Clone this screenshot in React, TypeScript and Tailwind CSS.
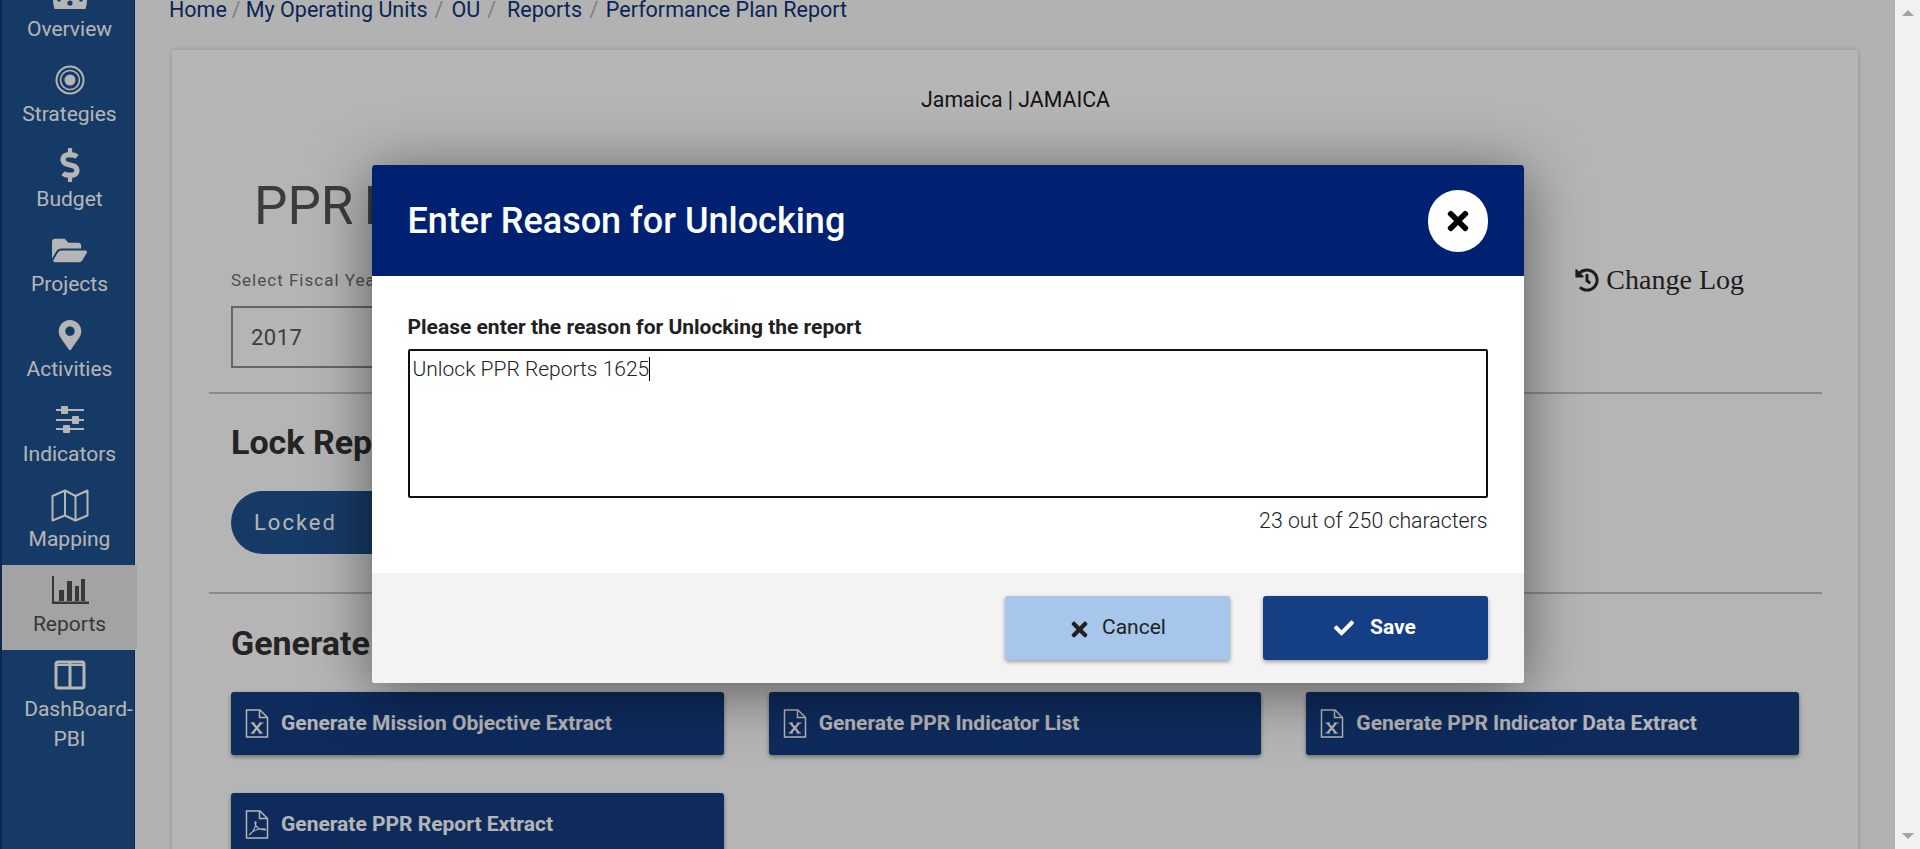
import { FaCheck, FaDollarSign, FaFolderOpen, FaHistory, FaMapMarkerAlt, FaTimes } from "react-icons/fa";

const font = { fontFamily: "Roboto, sans-serif" };

function OverviewIcon() {
  return (
    <svg width="36" height="30" viewBox="0 0 36 30" fill="currentColor">
      <path d="M18 1C8 1 1 9 1 20c0 3 .5 6 1.500 9h31c1-3 1.500-6 1.500-9C35 9 28 1 18 1z" />
      <circle cx="18" cy="23" r="2.600" fill="#205290" />
      <circle cx="7" cy="20" r="1.800" fill="#205290" />
      <circle cx="29" cy="20" r="1.800" fill="#205290" />
    </svg>
  );
}

function TargetIcon() {
  return (
    <svg width="30" height="30" viewBox="0 0 30 30" fill="none" stroke="currentColor">
      <circle cx="15" cy="15" r="13.500" strokeWidth="2" />
      <circle cx="15" cy="15" r="9.500" strokeWidth="1.600" />
      <circle cx="15" cy="15" r="5.500" fill="currentColor" strokeWidth="0" />
    </svg>
  );
}

function SlidersIcon() {
  return (
    <svg width="30" height="28" viewBox="0 0 30 28" fill="currentColor">
      <rect x="1" y="3" width="28" height="2" />
      <rect x="1" y="13" width="28" height="2" />
      <rect x="1" y="22" width="28" height="2" />
      <rect x="6" y="0" width="7" height="8" rx="1" />
      <rect x="17" y="10" width="7" height="8" rx="1" />
      <rect x="8" y="19" width="7" height="8" rx="1" />
    </svg>
  );
}

function MapIcon() {
  return (
    <svg width="38" height="33" viewBox="0 0 38 33" fill="none" stroke="currentColor" strokeWidth="2" strokeLinejoin="round">
      <path d="M1.500 7L14 1.500 24.500 7 36.500 1.500V26.500L24.500 31.500 14 26.500 1.500 31.500z" />
      <path d="M14 1.500v25M24.500 7v24.500" />
    </svg>
  );
}

function BarsIcon() {
  return (
    <svg width="38" height="28" viewBox="0 0 38 28" fill="currentColor">
      <path d="M1 0h2v25.500h35V28H1z" />
      <rect x="8" y="14" width="5" height="11" />
      <rect x="16" y="5" width="5" height="20" />
      <rect x="24" y="10" width="4" height="15" />
      <rect x="30" y="3" width="4" height="22" />
    </svg>
  );
}

function ColumnsIcon() {
  return (
    <svg width="32" height="30" viewBox="0 0 32 30" fill="none" stroke="currentColor" strokeWidth="3">
      <rect x="2" y="2" width="28" height="26" rx="2" />
      <path d="M16 3v25" />
      <path d="M2 5h28" strokeWidth="2" />
    </svg>
  );
}

function FileIcon({ kind }: { kind: "x" | "pdf" }) {
  return (
    <svg width="24" height="29" viewBox="0 0 24 29" fill="none" stroke="currentColor" strokeWidth="1.500" className="shrink-0">
      <path d="M1.500 1h13.500l7.500 7.500V28h-21z" />
      <path d="M14.500 1.500v7h7.500" />
      {kind === "x" ? (
        <g strokeWidth="2.200">
          <path d="M7.500 14l8.500 10M16 14l-8.500 10" />
          <path d="M5.500 14h4.500M14 14h4.500M5.500 24h4.500M13.500 24h4.500" strokeWidth="1.200" />
        </g>
      ) : (
        <path d="M4 25c3-2 6-6 7-12 0-2-1-2-1 0 0 4 5 7 10 7 1 0 1-1 0-1-5-1-12 1-16 6z" strokeWidth="1.100" />
      )}
    </svg>
  );
}

const navItems = [
  { label: "Overview", icon: <OverviewIcon /> },
  { label: "Strategies", icon: <TargetIcon /> },
  { label: "Budget", icon: <FaDollarSign size={34} /> },
  { label: "Projects", icon: <FaFolderOpen size={35} /> },
  { label: "Activities", icon: <FaMapMarkerAlt size={30} /> },
  { label: "Indicators", icon: <SlidersIcon /> },
  { label: "Mapping", icon: <MapIcon /> },
  { label: "Reports", icon: <BarsIcon />, active: true },
];

// separators are not evenly spaced in the breadcrumb
const crumbs = [
  { label: "Home", sep: "" },
  { label: "My Operating Units", sep: "px-[5px]" },
  { label: "OU", sep: "pl-[7px] pr-[8px]" },
  { label: "Reports", sep: "pl-[7px] pr-[11px]" },
  { label: "Performance Plan Report", sep: "px-[7.5px]" },
];

function GenerateButton({ label, kind }: { label: string; kind: "x" | "pdf" }) {
  return (
    <button className="flex h-[63px] items-center gap-[12px] rounded-[3px] bg-[#143d82] pl-[14px] text-[21px] font-bold text-white shadow-[0_2px_4px_rgba(0,0,0,0.4)]">
      <FileIcon kind={kind} />
      <span>{label}</span>
    </button>
  );
}

function Sidebar() {
  return (
    <aside className="z-10 -mt-[30px] h-[879px] w-[135px] shrink-0 border-l-2 border-r border-l-[#15396b] border-r-[#15396b] bg-[#205290] text-[21px] text-white">
      {navItems.map((item) => (
        <div
          key={item.label}
          className={`flex h-[85px] w-[135px] flex-col items-center pt-[6px] ${
            item.active ? "bg-[#e6e6e6] text-[#4f4f4f]" : ""
          }`}
        >
          <div className="flex h-[38px] items-center justify-center">{item.icon}</div>
          <span className="leading-[30px]">{item.label}</span>
        </div>
      ))}
      <div className="flex w-[135px] flex-col items-center pt-[6px]">
        <div className="flex h-[38px] items-center justify-center">
          <ColumnsIcon />
        </div>
        <span className="ml-[18px] leading-[30px]">DashBoard-</span>
        <span className="leading-[30px]">PBI</span>
      </div>
    </aside>
  );
}

function PageContent() {
  return (
    <main className="min-w-0 flex-1">
      <nav className="-mt-[3px] flex h-[26px] items-center pl-[34px] text-[21.5px] leading-[24px] text-[#0f3578]">
        {crumbs.map((crumb, i) => (
          <span key={crumb.label} className="flex">
            {i > 0 && <span className={`${crumb.sep} text-[#b5b5b5]`}>/</span>}
            {crumb.label}
          </span>
        ))}
      </nav>

      <section className="ml-[37px] mt-[27px] h-[900px] w-[1686px] bg-white pl-[37px] pr-[36px] pt-[39px] shadow-[0_0_5px_rgba(0,0,0,0.2)]">
        <p className="text-center text-[21.3px] leading-[22px] text-[#1a1a1a]">Jamaica | JAMAICA</p>
        <h1 className="ml-[45px] mt-[65px] text-[53px] font-normal leading-[60px] text-[#555] [word-spacing:-3px]">PPR Report</h1>

        <div className="mt-[34px] flex justify-between pl-[22px] pr-[78px]">
          <div>
            <label className="block text-[17px] leading-[20px] tracking-[1px] text-[#6f6f6f]">Select Fiscal Year</label>
            <div className="mt-[16px] flex h-[62px] w-[300px] items-center border-2 border-[#8f8f8f] pl-[18px] text-[22px] tracking-[0.5px] text-[#555]">
              2017
            </div>
          </div>
          <a className="flex h-[20px] items-center gap-[7px] text-[28px] text-[#2a2a2a]" style={{ fontFamily: "'Liberation Serif', serif" }}>
            <FaHistory size={24} />
            Change Log
          </a>
        </div>

        <div className="mt-[24px] h-[2px] bg-[#c4c4c4]" />

        <div className="pl-[22px]">
          <h2 className="mt-[28px] text-[34px] font-bold leading-[40px] text-[#333]">Lock Report</h2>
          <div className="mt-[29px] flex h-[63px] w-[300px] items-center rounded-full bg-[#205290] pl-[23px] text-[22px] tracking-[2px] text-white">
            Locked
          </div>
        </div>

        <div className="mt-[38px] h-[2px] bg-[#c4c4c4]" />

        <div className="pl-[22px]">
          <h2 className="mt-[29px] text-[34px] font-bold leading-[40px] text-[#333]">Generate Reports</h2>
          <div className="mt-[29px] grid w-[1568px] grid-cols-3 gap-x-[45px] gap-y-[38px]">
            <GenerateButton label="Generate Mission Objective Extract" kind="x" />
            <GenerateButton label="Generate PPR Indicator List" kind="x" />
            <GenerateButton label="Generate PPR Indicator Data Extract" kind="x" />
            <GenerateButton label="Generate PPR Report Extract" kind="pdf" />
          </div>
        </div>
      </section>
    </main>
  );
}

function UnlockModal() {
  return (
    <div className="absolute inset-0 z-20 flex items-center justify-center bg-[rgba(0,0,0,0.29)] pb-px">
      <div className="flex h-[518px] w-[1152px] flex-col overflow-hidden rounded-[3px] bg-white shadow-[0_8px_60px_rgba(0,0,0,0.5)]">
        <header className="flex h-[111px] shrink-0 items-center justify-between bg-[#002171] px-[36px]">
          <h2 className="text-[36px] font-medium text-white">Enter Reason for Unlocking</h2>
          <button className="flex h-[62px] w-[60px] items-center justify-center rounded-full bg-white text-black">
            <FaTimes size={30} />
          </button>
        </header>

        <div className="flex-1 px-[36px] pt-[39px]">
          <label className="block text-[21px] font-bold leading-[24px] text-[#212121]">
            Please enter the reason for Unlocking the report
          </label>
          <div className="mt-[10px] h-[149px] rounded-[2px] border-2 border-[#111] px-[3px] py-[6px] text-[21px] font-light leading-[24px] text-[#212121]">
            Unlock PPR Reports 1625
            <span className="inline-block h-[24px] w-px bg-black align-top" />
          </div>
          <p className="mt-[11px] text-right text-[21.3px] font-light leading-[24px] text-[#212121]">
            23 out of 250 characters
          </p>
        </div>

        <footer className="flex h-[110px] shrink-0 items-center justify-end gap-[33px] bg-[#f3f3f3] pr-[36px]">
          <button className="flex h-[64px] w-[225px] items-center justify-center gap-[11px] rounded-[3px] bg-[#a6c6ec] text-[21px] text-[#212121] shadow-[0_2px_4px_rgba(0,0,0,0.35)]">
            <FaTimes size={23} className="mt-[3px]" />
            Cancel
          </button>
          <button className="flex h-[64px] w-[225px] items-center justify-center gap-[16px] rounded-[3px] bg-[#153f85] text-[21px] font-bold text-white shadow-[0_2px_4px_rgba(0,0,0,0.35)]">
            <FaCheck size={20} />
            Save
          </button>
        </footer>
      </div>
    </div>
  );
}

function Scrollbar() {
  return (
    <div className="flex w-[25px] shrink-0 flex-col items-center justify-between bg-[#f1f1f1] py-[10px]">
      <div className="h-0 w-0 border-x-[6px] border-b-[6px] border-x-transparent border-b-[#a3a3a3]" />
      <div className="h-0 w-0 border-x-[6px] border-t-[6px] border-x-transparent border-t-[#a3a3a3]" />
    </div>
  );
}

export default function App() {
  return (
    <div className="flex h-[849px] w-full overflow-hidden bg-[#fbfbfb]" style={font}>
      <div className="relative flex min-w-0 flex-1 overflow-hidden">
        <Sidebar />
        <PageContent />
        <UnlockModal />
      </div>
      <Scrollbar />
    </div>
  );
}
